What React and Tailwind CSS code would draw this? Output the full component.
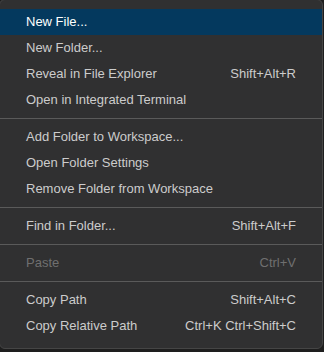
const groups = [
  [
    { label: "New File...", active: true },
    { label: "New Folder..." },
    { label: "Reveal in File Explorer", keys: "Shift+Alt+R" },
    { label: "Open in Integrated Terminal" },
  ],
  [
    { label: "Add Folder to Workspace..." },
    { label: "Open Folder Settings" },
    { label: "Remove Folder from Workspace" },
  ],
  [{ label: "Find in Folder...", keys: "Shift+Alt+F" }],
  [{ label: "Paste", keys: "Ctrl+V", disabled: true }],
  [
    { label: "Copy Path", keys: "Shift+Alt+C" },
    { label: "Copy Relative Path", keys: "Ctrl+K Ctrl+Shift+C" },
  ],
];

function MenuItem({ item }) {
  const color = item.active
    ? "bg-[#04395e] text-white"
    : item.disabled
    ? "text-[#6f6f6f]"
    : "text-[#cccccc]";
  return (
    <div className={`flex h-[26px] items-center justify-between pl-[26px] pr-[26px] ${color}`}>
      <span>{item.label}</span>
      {item.keys && <span>{item.keys}</span>}
    </div>
  );
}

export default function App() {
  return (
    <div
      className="h-[352px] w-[324px] overflow-hidden bg-[#1e1e1e] text-[13px]"
      style={{ fontFamily: '"Segoe UI", "Liberation Sans", Arial, sans-serif' }}
    >
      <div className="-ml-px -mt-px w-[324px] rounded-md border border-[#454545] bg-[#303031] pt-[9px] pb-[9px]">
        {groups.map((group, gi) => (
          <div key={gi}>
            {gi > 0 && (
              <div className="pt-[5px] pb-[5px]">
                <div className="h-px bg-[#5a5a5a]" />
              </div>
            )}
            {group.map((item) => (
              <MenuItem key={item.label} item={item} />
            ))}
          </div>
        ))}
      </div>
    </div>
  );
}
